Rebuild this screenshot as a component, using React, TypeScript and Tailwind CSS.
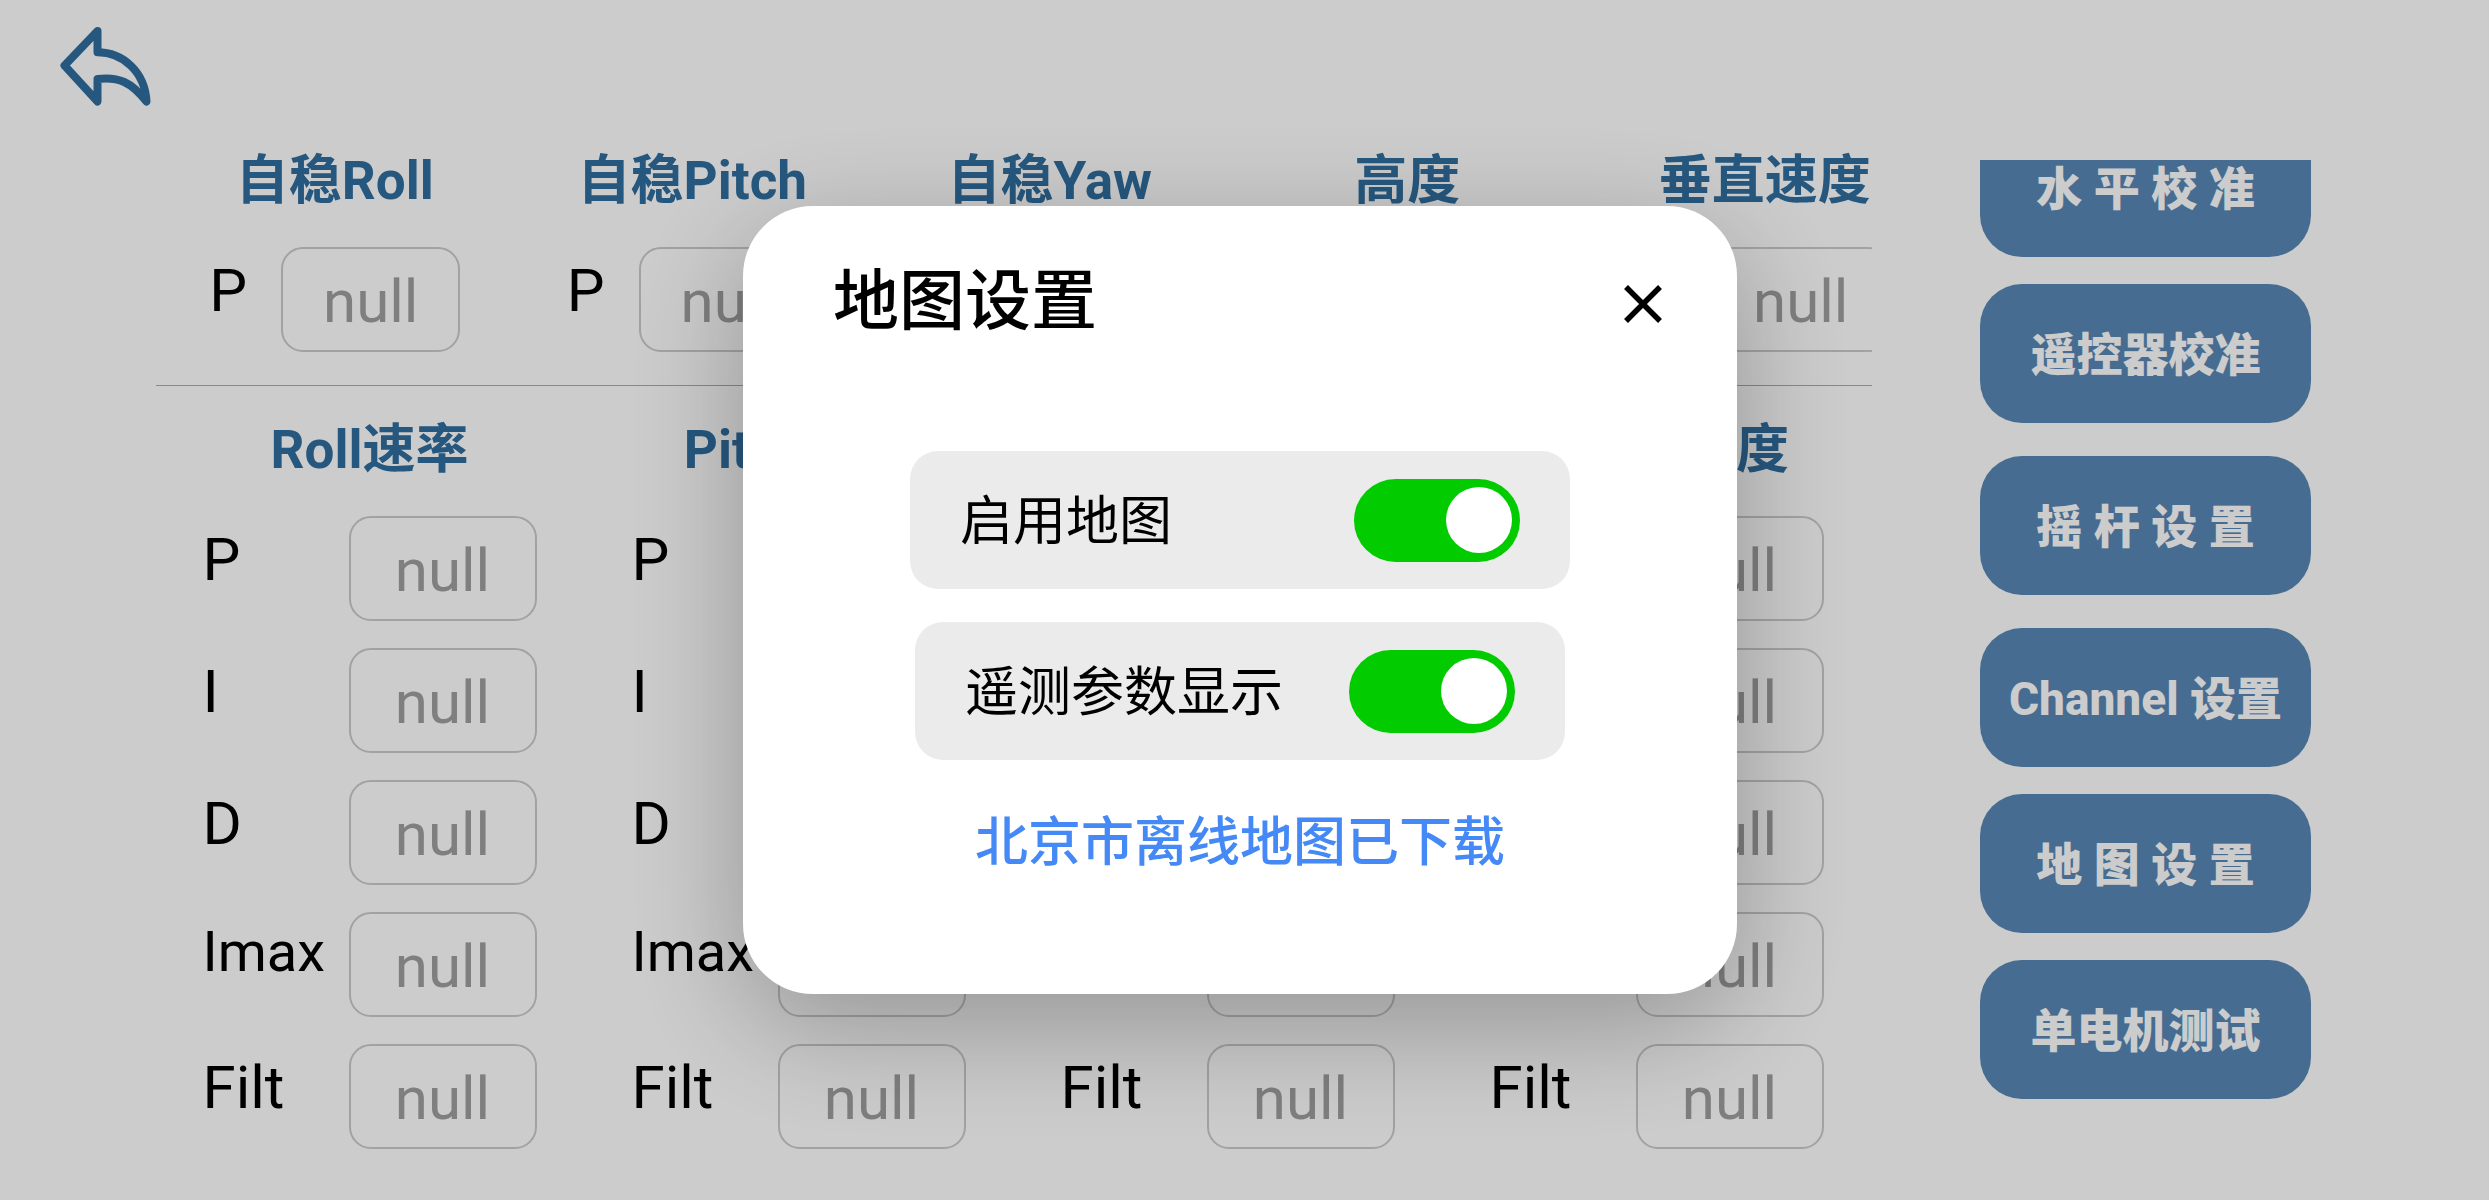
import { useState } from "react";

const FONT = "font-['Roboto','Noto_Sans_CJK_SC',sans-serif]";

const stabilize = ["自稳Roll", "自稳Pitch", "自稳Yaw", "高度", "垂直速度"];
const rates = ["Roll速率", "Pitch速率", "Yaw速率", "垂直加速度"];
const params = ["P", "I", "D", "Imax", "Filt"];

const actionGroups = [
  ["水 平 校 准", "遥控器校准"],
  ["摇 杆 设 置"],
  ["Channel 设置", "地 图 设 置", "单电机测试"],
];

function ParamField({
  id,
  label,
  labelWidth,
  inputWidth,
}: {
  id: string;
  label: string;
  labelWidth: string;
  inputWidth: string;
}) {
  const labelSize =
    label === "Imax" ? "text-[56px] leading-[80px]" : "text-[60px] leading-[88px]";

  return (
    <div className="flex items-start justify-center">
      <label htmlFor={id} className={`${labelWidth} ${labelSize} shrink-0 text-black`}>
        {label}
      </label>
      <input
        id={id}
        type="text"
        placeholder="null"
        className={`${inputWidth} h-[105px] shrink-0 rounded-[22px] border-2 border-[#cbcbcb] bg-transparent pt-1 text-center text-[60px] text-black placeholder:text-[#9f9f9f]`}
      />
    </div>
  );
}

function Heading({ children }: { children: string }) {
  return (
    <h2 className="mb-[30px] text-center text-[53px] leading-[72px] font-bold whitespace-nowrap text-[#306e9f]">
      {children}
    </h2>
  );
}

function ToggleRow({
  label,
  checked,
  onChange,
  width,
}: {
  label: string;
  checked: boolean;
  onChange: (checked: boolean) => void;
  width: string;
}) {
  return (
    <label
      className={`${width} flex h-[138px] items-center justify-between rounded-[28px] bg-[#ebebeb] px-[50px]`}
    >
      <span className="pt-1 text-[53px] leading-[72px] text-black">{label}</span>
      <input
        type="checkbox"
        role="switch"
        checked={checked}
        onChange={(e) => onChange(e.target.checked)}
        className="flex h-[83px] w-[166px] appearance-none items-center rounded-full bg-[#c4c4c4] px-2 before:size-[66px] before:rounded-full before:bg-white checked:justify-end checked:bg-[#02cc00]"
      />
    </label>
  );
}

function MapSettingsModal({ onClose }: { onClose: () => void }) {
  const [mapEnabled, setMapEnabled] = useState(true);
  const [telemetryVisible, setTelemetryVisible] = useState(true);

  return (
    <div className="fixed inset-0 flex items-center justify-center bg-black/20 pr-[9px]">
      <div
        role="dialog"
        aria-labelledby="map-settings-title"
        className="w-[994px] rounded-[70px] bg-white pb-[115px] shadow-[0_32px_120px_rgba(0,0,0,0.28)]"
      >
        <div className="flex items-center justify-between pt-12 pr-[64px] pl-[90px]">
          <h1
            id="map-settings-title"
            className="text-[66px] leading-[96px] font-medium text-black"
          >
            地图设置
          </h1>
          <button type="button" aria-label="关闭" onClick={onClose} className="px-2 pt-4 pb-3">
            <svg viewBox="0 0 44 44" className="size-[44px]" fill="none" stroke="#000" strokeWidth="5.5">
              <path d="M5 5L39 39M39 5L5 39" />
            </svg>
          </button>
        </div>

        <div className="mt-[101px] flex flex-col items-center gap-[33px]">
          <ToggleRow
            label="启用地图"
            checked={mapEnabled}
            onChange={setMapEnabled}
            width="w-[660px]"
          />
          <ToggleRow
            label="遥测参数显示"
            checked={telemetryVisible}
            onChange={setTelemetryVisible}
            width="w-[650px]"
          />
          <a href="#offline-map" className="mt-[14px] text-[53px] leading-[72px] font-medium text-[#4489f5]">
            北京市离线地图已下载
          </a>
        </div>
      </div>
    </div>
  );
}

export default function App() {
  const [isModalOpen, setIsModalOpen] = useState(true);

  return (
    <div className={`${FONT} min-h-screen overflow-hidden bg-white`}>
      <header className="h-[145px] pt-[26px] pl-[59px]">
        <button type="button" aria-label="返回" className="block">
          <svg
            viewBox="0 0 93 81"
            className="h-[81px] w-[93px]"
            fill="none"
            stroke="#306e9f"
            strokeWidth="8"
            strokeLinejoin="round"
          >
            <path d="M38.5 5L5.5 39.5L38.5 75.5V53C60 50.5 72 56 87.5 75.5C86 46 64 26.3 38.5 26.3Z" />
          </svg>
        </button>
      </header>

      <div className="flex items-start pr-[178px] pl-[156px]">
        <main className="min-w-0 flex-1">
          <section className="flex overflow-hidden border-b border-[#aaaaaa] pb-[33px]">
            {stabilize.map((title) => (
              <div key={title} className="w-5/24 shrink-0">
                <Heading>{title}</Heading>
                <ParamField
                  id={`${title}-P`}
                  label="P"
                  labelWidth="w-[72px]"
                  inputWidth="w-[179px]"
                />
              </div>
            ))}
          </section>

          <section className="grid grid-cols-4 pt-7">
            {rates.map((title) => (
              <div key={title} className="pr-0.5">
                <Heading>{title}</Heading>
                <div className="flex flex-col gap-[27px]">
                  {params.map((param) => (
                    <ParamField
                      key={param}
                      id={`${title}-${param}`}
                      label={param}
                      labelWidth="w-[146px]"
                      inputWidth="w-[188px]"
                    />
                  ))}
                </div>
              </div>
            ))}
          </section>
        </main>

        {/* action list, scrolled a little past its first button */}
        <aside className="mt-[15px] ml-[108px] w-[331px] shrink-0 overflow-hidden">
          <div className="-mt-[42px] flex flex-col gap-[33px]">
            {actionGroups.map((group) => (
              <div key={group[0]} className="flex flex-col gap-[27px]">
                {group.map((action) => (
                  <button
                    key={action}
                    type="button"
                    onClick={() => setIsModalOpen(true)}
                    className="h-[139px] rounded-[42px] bg-[#5888b6] pt-1 text-[46px] font-extrabold whitespace-nowrap text-white"
                  >
                    {action}
                  </button>
                ))}
              </div>
            ))}
          </div>
        </aside>
      </div>

      {isModalOpen && <MapSettingsModal onClose={() => setIsModalOpen(false)} />}
    </div>
  );
}
